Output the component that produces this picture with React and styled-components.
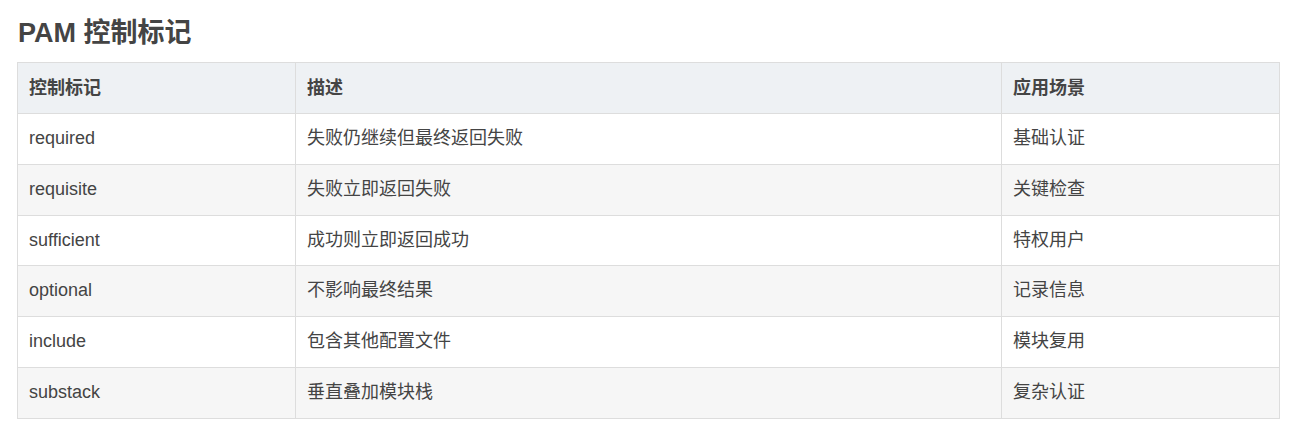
import React from "react";
import styled, { createGlobalStyle } from "styled-components";

const GlobalStyle = createGlobalStyle`
  body {
    margin: 0;
    background: #ffffff;
    font-family: "Liberation Sans", Arial, "Noto Sans CJK SC", sans-serif;
    color: #444444;
  }
`;

const rows = [
  { flag: "required", desc: "失败仍继续但最终返回失败", use: "基础认证" },
  { flag: "requisite", desc: "失败立即返回失败", use: "关键检查" },
  { flag: "sufficient", desc: "成功则立即返回成功", use: "特权用户" },
  { flag: "optional", desc: "不影响最终结果", use: "记录信息" },
  { flag: "include", desc: "包含其他配置文件", use: "模块复用" },
  { flag: "substack", desc: "垂直叠加模块栈", use: "复杂认证" },
];

export default function App() {
  return (
    <>
      <GlobalStyle />
      <Section>
        <Title>PAM 控制标记</Title>
        <Table>
          <colgroup>
            <col style={{ width: 278 }} />
            <col style={{ width: 706 }} />
            <col style={{ width: 278 }} />
          </colgroup>
          <thead>
            <tr>
              <HeadCell>控制标记</HeadCell>
              <HeadCell>描述</HeadCell>
              <HeadCell>应用场景</HeadCell>
            </tr>
          </thead>
          <tbody>
            {rows.map((row, i) => (
              <Row key={row.flag} $striped={i % 2 === 1}>
                <Cell>{row.flag}</Cell>
                <Cell>{row.desc}</Cell>
                <Cell>{row.use}</Cell>
              </Row>
            ))}
          </tbody>
        </Table>
      </Section>
    </>
  );
}

const Section = styled.section`
  padding: 18px 13px 0 17px;
`;

const Title = styled.h2`
  margin: 0 0 13px 1px;
  font-size: 27px;
  line-height: 31px;
  font-weight: bold;
  color: #444444;
`;

const Table = styled.table`
  width: 1263px;
  border-collapse: collapse;
  table-layout: fixed;
  font-size: 18px;
`;

const HeadCell = styled.th`
  padding: 12px 11px;
  line-height: 26px;
  text-align: left;
  font-weight: bold;
  background: #eef1f4;
  border: 1px solid #dddddd;
  color: #444444;
`;

const Row = styled.tr`
  background: ${(p) => (p.$striped ? "#f6f6f6" : "#ffffff")};
`;

const Cell = styled.td`
  padding: 12px 11px;
  line-height: 25.8px;
  border: 1px solid #dddddd;
  color: #444444;
`;
